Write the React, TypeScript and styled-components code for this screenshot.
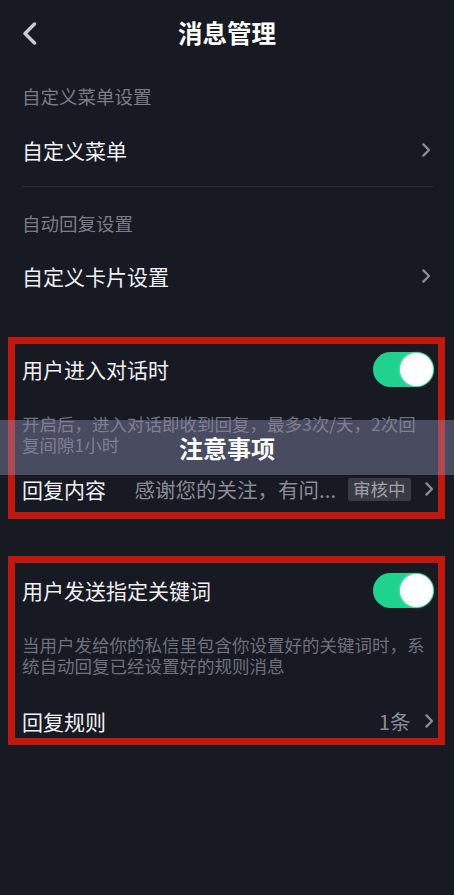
import React from 'react'
import styled, { createGlobalStyle } from 'styled-components'

const GlobalStyle = createGlobalStyle`
  html, body {
    margin: 0;
    padding: 0;
    background-color: #171923;
  }
  body {
    font-family: "Noto Sans CJK SC", "Noto Sans", sans-serif;
    color: #f1f1f3;
  }
`

const StyledPage = styled.div`
  position: relative;
  width: 454px;
  min-height: 895px;
  background-color: #171923;
  overflow: hidden;
`

const StyledHeader = styled.header`
  display: grid;
  grid-template-columns: 1fr auto 1fr;
  align-items: center;
  height: 67px;
  padding: 0 22px;
  box-sizing: border-box;
`

const StyledBack = styled.div`
  display: flex;
  align-items: center;
  width: 20px;
  height: 26px;
  color: #c9c9ce;
`

const StyledTitle = styled.h1`
  margin: 0;
  font-size: 24.5px;
  font-weight: 700;
  line-height: 1;
  color: #ffffff;
`

const StyledSectionLabel = styled.div<{ $top: number; $bottom: number }>`
  padding: ${(p) => p.$top}px 22px ${(p) => p.$bottom}px;
  font-size: 18.5px;
  line-height: 26px;
  color: #7b7c86;
`

const StyledRow = styled.div<{ $height: number }>`
  display: flex;
  align-items: center;
  height: ${(p) => p.$height}px;
  gap: 12px;
`

const StyledNavRow = styled(StyledRow)`
  padding: 0 22px;
`

const StyledRowTitle = styled.span`
  flex: 1;
  font-size: 21px;
  line-height: 1;
  color: #f1f1f3;
  white-space: nowrap;
`

const StyledValue = styled.span`
  font-size: 20.5px;
  line-height: 1;
  color: #8a8b94;
  white-space: nowrap;
`

const StyledBadge = styled.span`
  display: inline-flex;
  align-items: center;
  height: 23px;
  padding: 0 5px;
  border-radius: 2px;
  background-color: #393a44;
  color: #a0a0a8;
  font-size: 17.5px;
  line-height: 1;
`

const StyledChevron = styled.span`
  display: flex;
  align-items: center;
  color: #8d8e96;
  margin-left: 2px;
  margin-right: 2px;
`

const StyledDivider = styled.div`
  height: 1px;
  margin: 14px 21px 0 22px;
  background-color: #2a2c36;
`

const StyledBox = styled.section<{ $top: number }>`
  margin: ${(p) => p.$top}px 9px 0 8px;
  border: 7px solid #c0170f;
  padding: 0 3px 0 7px;
`

const StyledDescription = styled.p<{ $top: number }>`
  margin: ${(p) => p.$top}px 0 0;
  padding-right: 6px;
  font-size: 17.5px;
  line-height: 20.5px;
  color: #6f717b;
`

const StyledSwitch = styled.div<{ $on: boolean }>`
  position: relative;
  flex: none;
  width: 61px;
  height: 35px;
  border-radius: 18px;
  background-color: ${(p) => (p.$on ? '#1fd38f' : '#3a3b45')};
  margin-right: 1px;

  &::after {
    content: '';
    position: absolute;
    top: 1px;
    left: ${(p) => (p.$on ? '27px' : '1px')};
    width: 33px;
    height: 33px;
    border-radius: 50%;
    background-color: #ffffff;
    box-shadow: 0 0 3px rgba(255, 255, 255, 0.6);
  }
`

const StyledNotice = styled.div`
  position: absolute;
  top: 420px;
  left: 0;
  width: 100%;
  height: 55px;
  display: flex;
  align-items: center;
  justify-content: center;
  background-color: rgba(150, 150, 190, 0.4);
  font-size: 24px;
  font-weight: 700;
  color: #ffffff;
`

const Chevron: React.FC<{ size?: number; width?: number }> = ({ size = 14, width = 2.4 }) => (
  <svg width={size * 0.6} height={size} viewBox="0 0 9 15" fill="none">
    <path
      d="M1.5 1.5L7.5 7.5L1.5 13.5"
      stroke="currentColor"
      strokeWidth={width}
      strokeLinecap="round"
      strokeLinejoin="round"
    />
  </svg>
)

const BackIcon: React.FC = () => (
  <svg width="15" height="23" viewBox="0 0 15 23" fill="none">
    <path
      d="M12.5 2L3 11.5L12.5 21"
      stroke="currentColor"
      strokeWidth="3.4"
      strokeLinecap="round"
      strokeLinejoin="round"
    />
  </svg>
)

export default function App() {
  return (
    <>
      <GlobalStyle />
      <StyledPage>
        <StyledHeader>
          <StyledBack>
            <BackIcon />
          </StyledBack>
          <StyledTitle>消息管理</StyledTitle>
          <span />
        </StyledHeader>

        <StyledSectionLabel $top={16} $bottom={19}>自定义菜单设置</StyledSectionLabel>
        <StyledNavRow $height={44}>
          <StyledRowTitle>自定义菜单</StyledRowTitle>
          <StyledChevron>
            <Chevron />
          </StyledChevron>
        </StyledNavRow>
        <StyledDivider />

        <StyledSectionLabel $top={23} $bottom={18}>自动回复设置</StyledSectionLabel>
        <StyledNavRow $height={44}>
          <StyledRowTitle>自定义卡片设置</StyledRowTitle>
          <StyledChevron>
            <Chevron />
          </StyledChevron>
        </StyledNavRow>

        <StyledBox $top={39}>
          <StyledRow $height={50}>
            <StyledRowTitle>用户进入对话时</StyledRowTitle>
            <StyledSwitch $on />
          </StyledRow>
          <StyledDescription $top={20}>
            开启后，进入对话即收到回复，最多3次/天，2次回复间隙1小时
          </StyledDescription>
          <StyledRow $height={46} style={{ marginTop: 11 }}>
            <StyledRowTitle>回复内容</StyledRowTitle>
            <StyledValue>感谢您的关注，有问...</StyledValue>
            <StyledBadge>审核中</StyledBadge>
            <StyledChevron>
              <Chevron />
            </StyledChevron>
          </StyledRow>
        </StyledBox>

        <StyledBox $top={37}>
          <StyledRow $height={54}>
            <StyledRowTitle>用户发送指定关键词</StyledRowTitle>
            <StyledSwitch $on />
          </StyledRow>
          <StyledDescription $top={18}>
            当用户发给你的私信里包含你设置好的关键词时，系统自动回复已经设置好的规则消息
          </StyledDescription>
          <StyledRow $height={34} style={{ marginTop: 28 }}>
            <StyledRowTitle>回复规则</StyledRowTitle>
            <StyledValue>1条</StyledValue>
            <StyledChevron>
              <Chevron />
            </StyledChevron>
          </StyledRow>
        </StyledBox>

        <StyledNotice>注意事项</StyledNotice>
      </StyledPage>
    </>
  )
}
